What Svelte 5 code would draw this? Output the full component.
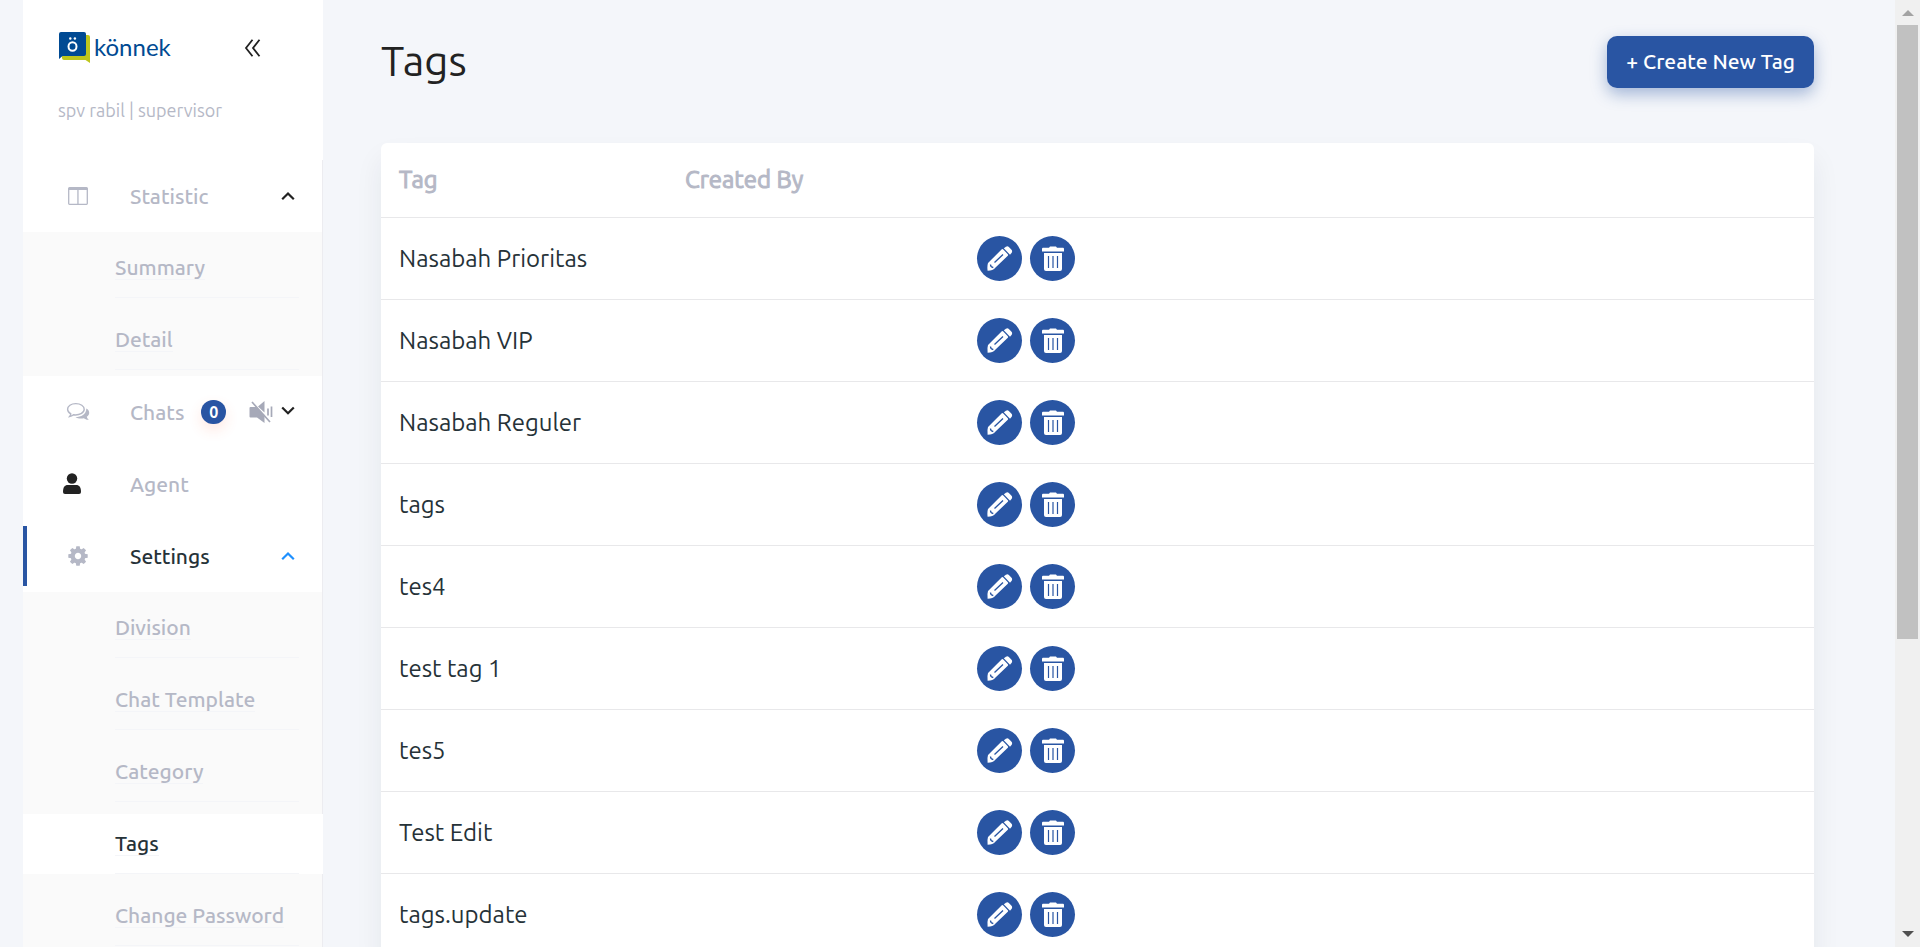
<script>
  const statistic = ['Summary', 'Detail'];
  const settings = ['Division', 'Chat Template', 'Category', 'Tags', 'Change Password'];
  const tags = [
    'Nasabah Prioritas',
    'Nasabah VIP',
    'Nasabah Reguler',
    'tags',
    'tes4',
    'test tag 1',
    'tes5',
    'Test Edit',
    'tags.update'
  ];
  const teeth = [0, 45, 90, 135, 180, 225, 270, 315];
</script>

{#snippet chevron(down)}
  <svg class="chevron" width="14" height="10" viewBox="0 0 14 10" aria-hidden="true">
    <path d={down ? 'M1.2 1.500 7 7.300 12.800 1.500' : 'M1.2 8.300 7 2.500 12.800 8.300'} fill="none" stroke="currentColor" stroke-width="2.200" />
  </svg>
{/snippet}

{#snippet submenu(items)}
  <ul class="submenu">
    {#each items as item}
      <li class:current={item === 'Tags'}>
        <a href="#{item}"><span>{item}</span></a>
      </li>
    {/each}
  </ul>
{/snippet}

<div class="shell">
  <div class="viewport">
    <aside>
      <div class="brand">
        <div class="brand-row">
          <a class="logo" href="#home">
            <svg width="33" height="34" viewBox="0 0 33 34" aria-hidden="true">
              <path d="M6 5H30Q32 5 32 7V33L27.500 30H6Q4 30 4 28V7Z" fill="#bec61c" />
              <path d="M3 2H26Q28 2 28 4V24Q28 26 26 26H4.500L1 29V4Q1 2 3 2Z" fill="#004a93" />
              <ellipse cx="14.500" cy="16.500" rx="4" ry="4.300" fill="none" stroke="#fff" stroke-width="2" />
              <circle cx="12.300" cy="8.500" r="1.200" fill="#fff" />
              <circle cx="16.900" cy="8.500" r="1.200" fill="#fff" />
            </svg>
            <span>könnek</span>
          </a>
          <button class="collapse" aria-label="Collapse menu">
            <svg width="18" height="20" viewBox="0 0 18 20" aria-hidden="true">
              <path d="M8.500 2.800 2 11 8.500 19.200M15.500 2.800 9 11 15.500 19.200" fill="none" stroke="#222" stroke-width="1.800" />
            </svg>
          </button>
        </div>
        <p>spv rabil | supervisor</p>
      </div>

      <nav>
        <a class="item" href="#statistic">
          <svg class="icon" width="20" height="18" viewBox="0 0 20 18" aria-hidden="true">
            <path d="M.7 2V16.500Q.7 17.300 1.500 17.300H18.500Q19.300 17.300 19.300 16.500V2" fill="none" stroke="currentColor" stroke-width="1.300" />
            <path d="M1.500 0H18.500Q20 0 20 1.500V3H0V1.500Q0 0 1.500 0ZM9.300 2H10.600V17H9.300Z" fill="currentColor" />
          </svg>
          <span class="label">Statistic</span>
          {@render chevron(false)}
        </a>
        {@render submenu(statistic)}

        <a class="item" href="#chats">
          <svg class="icon" width="24" height="20" viewBox="0 0 24 20" aria-hidden="true">
            <path d="M20.300 6.500C22.200 7.500 23.200 9 23.200 10.800 23.200 12.400 22.300 13.800 20.800 14.800 21 16 21.800 17 22.800 17.800 20.800 18 19 17.300 17.800 16.300 14.500 17 11.500 16.500 9.500 15 15 15 20.500 12.500 20.300 6.500Z" fill="currentColor" />
            <path d="M9.800 1.600C5 1.600 1.600 4 1.600 7.300 1.600 9.200 2.800 10.800 4.800 11.900 4.700 13 4.200 13.800 3.500 14.600 5.200 14.400 6.500 13.700 7.500 12.800 13.500 13.500 18.200 11 18.200 7.300 18.200 4 14.600 1.600 9.800 1.600Z" fill="#fff" stroke="currentColor" stroke-width="1.400" />
          </svg>
          <span class="label">Chats</span>
          <span class="badge">0</span>
          <svg class="mute" width="24" height="24" viewBox="0 0 24 24" aria-hidden="true">
            <path d="M1.500 7H7L15.500 15V23L8 17.500H1.500Q.5 17.500 .5 16.500V8Q.5 7 1.500 7ZM9 6.500 15.500 1V12.500Z" fill="currentColor" />
            <path d="M3 2 21 22M19 8.500V15.500M22.500 6.500V17" fill="none" stroke="currentColor" stroke-width="1.700" />
          </svg>
          {@render chevron(true)}
        </a>

        <a class="item agent" href="#agent">
          <svg class="icon" width="20" height="22" viewBox="0 0 20 22" aria-hidden="true">
            <circle cx="10" cy="5.500" r="5.200" fill="#222" />
            <path d="M1 19C1 14.500 2.500 12 6 12H14C17.500 12 19 14.500 19 19Q19 21 17 21H3Q1 21 1 19Z" fill="#222" />
          </svg>
          <span class="label">Agent</span>
        </a>

        <a class="item active" href="#settings">
          <svg class="icon" width="20" height="20" viewBox="-10 -10 20 20" aria-hidden="true">
            <circle r="5.300" fill="none" stroke="currentColor" stroke-width="4.200" />
            {#each teeth as angle}
              <path d="M-2.300 -6.500-1.700 -9.700H1.700L2.300 -6.500Z" fill="currentColor" transform="rotate({angle})" />
            {/each}
          </svg>
          <span class="label">Settings</span>
          {@render chevron(false)}
        </a>
        {@render submenu(settings)}
      </nav>
    </aside>

    <main>
      <header>
        <h1>Tags</h1>
        <button class="create">+ Create New Tag</button>
      </header>

      <div class="card">
        <table>
          <thead>
            <tr><th class="name">Tag</th><th class="author">Created By</th><th></th></tr>
          </thead>
          <tbody>
            {#each tags as tag}
              <tr>
                <td>{tag}</td>
                <td></td>
                <td>
                  <div class="actions">
                    <button aria-label="Edit {tag}">
                      <svg width="26" height="26" viewBox="0 0 26 26" aria-hidden="true">
                        <path d="M14.800 3.300Q15.600 2.800 16.300 3.600L20.800 8.200Q21.500 9 20.800 9.700L8.500 21.500Q6 24.800 .6 24.800Q0 20 1 17Z" fill="#fff" />
                        <path d="M16.800 2.200 19 .7Q20.500 -.2 21.900 1.100L24.500 3.800Q25.700 5.200 24.700 6.700L23 8.700Z" fill="#fff" />
                        <path d="M7.500 16.500 16 8.500M3.500 18.500Q3.500 21.300 6.300 21.500" fill="none" stroke="#2955a3" stroke-width="1.300" />
                      </svg>
                    </button>
                    <button aria-label="Delete {tag}">
                      <svg width="24" height="26" viewBox="0 0 24 26" aria-hidden="true">
                        <path d="M9 .5H15L16 1.800H22Q23 1.800 23 3V5.500H1V3Q1 1.800 2 1.800H8Z" fill="#fff" />
                        <path d="M3 7H21V23Q21 25 19 25H5Q3 25 3 23Z" fill="#fff" />
                        <path d="M7.500 10V22M12 10V22M16.500 10V22" stroke="#2955a3" stroke-width="1.200" />
                      </svg>
                    </button>
                  </div>
                </td>
              </tr>
            {/each}
          </tbody>
        </table>
      </div>
    </main>
  </div>

  <div class="scrollbar" aria-hidden="true">
    <svg width="12" height="6" viewBox="0 0 12 6"><path d="M0 6 6 0 12 6Z" fill="#a3a3a3" /></svg>
    <div class="track"><div class="thumb"></div></div>
    <svg width="12" height="6" viewBox="0 0 12 6"><path d="M0 0 6 6 12 0Z" fill="#505050" /></svg>
  </div>
</div>

<style>
  :global(body) {
    background: #f4f6fa;
    color: #263238;
    font-family: Ubuntu, 'Noto Sans', sans-serif;
  }

  .shell {
    display: flex;
    height: 100vh;
  }

  .viewport {
    display: flex;
    flex: 1;
    min-width: 0;
    padding-left: 23px;
    overflow-y: auto;
    scrollbar-width: none;
    align-items: flex-start;
  }

  button {
    padding: 0;
    border: 0;
    background: none;
    font: inherit;
    cursor: pointer;
  }

  a {
    color: inherit;
    text-decoration: none;
  }

  svg {
    display: block;
    flex: none;
  }

  aside {
    box-sizing: border-box;
    flex: none;
    width: 300px;
    min-height: 100%;
    background: #fff;
    color: #b5b8c6;
  }

  .brand {
    box-sizing: border-box;
    height: 160px;
    padding: 30px 61px 0 35px;
  }

  .brand-row {
    display: flex;
    align-items: center;
    justify-content: space-between;
  }

  .logo {
    display: flex;
    align-items: center;
    gap: 3px;
    color: #004a93;
    font: 24px/32px Lato, sans-serif;
  }

  .brand p {
    margin: 32px 0 0;
    font-size: 18px;
    line-height: 28px;
  }

  nav {
    border-right: 1px solid #ececf0;
  }

  .item {
    display: flex;
    align-items: center;
    height: 60px;
    padding: 6px 27px 6px 0;
    font-size: 21px;
    font-weight: 500;
  }

  .icon {
    width: 24px;
    margin: 0 40px 0 43px;
  }

  .active {
    color: #263238;
    background: linear-gradient(#2955a3, #2955a3) left center / 4px 60px no-repeat;
  }

  .active .icon {
    color: #b5b8c6;
  }

  .agent .icon {
    margin: 0 46px 0 37px;
  }

  .chevron {
    margin-left: auto;
    color: #222;
  }

  .active .chevron {
    color: #1e90ff;
  }

  .badge {
    width: 25px;
    margin-left: 17px;
    border-radius: 12px;
    background: #2955a3;
    box-shadow: 0 6px 14px rgb(255 90 50 / 14%);
    color: #fff;
    font-size: 16px;
    font-weight: 700;
    line-height: 24px;
    text-align: center;
  }

  .mute {
    margin-left: 23px;
    color: #a6a9b8;
  }

  .mute + .chevron {
    margin-bottom: 3px;
  }

  .submenu {
    margin: 0;
    padding: 6px 0;
    background: #fafafa;
    list-style: none;
  }

  .submenu li {
    margin-right: -1px;
    padding: 0 24px 0 92px;
  }

  .submenu li + li {
    margin-top: 12px;
  }

  .submenu a {
    display: flex;
    align-items: center;
    height: 59px;
    border-bottom: 1px solid #f4f5f8;
    font-size: 21px;
    font-weight: 500;
    line-height: 24px;
    white-space: nowrap;
  }

  .submenu span {
    border-bottom: 1px solid #f4f5f8;
  }

  .submenu .current {
    background: #fff;
    color: #263238;
  }

  main {
    flex: 1;
    min-width: 0;
    padding: 36px 81px 40px 58px;
  }

  header {
    display: flex;
    align-items: flex-start;
    justify-content: space-between;
    margin-bottom: 55px;
  }

  h1 {
    margin: 0;
    color: #222;
    font-size: 42px;
    font-weight: 400;
    line-height: 50px;
  }

  .create {
    padding: 0 19px 2px;
    border-radius: 10px;
    background: #2955a3;
    box-shadow: 0 6px 16px rgb(41 85 163 / 40%);
    color: #fff;
    font-size: 21px;
    font-weight: 500;
    line-height: 50px;
  }

  .card {
    border-radius: 6px;
    background: #fff;
    box-shadow: 0 16px 28px rgb(30 40 60 / 7%);
  }

  table {
    width: 100%;
    border-collapse: collapse;
    font-size: 24px;
    line-height: 36px;
  }

  th {
    height: 36px;
    padding: 19px 18px;
    border-bottom: 1px solid #e8e8ea;
    color: #b5b8c6;
    font-weight: 400;
    text-align: left;
    -webkit-text-stroke: 1px currentColor;
  }

  .name {
    width: 250px;
  }

  .author {
    width: 256px;
  }

  td {
    padding: 18px;
    border-bottom: 1px solid #e8e8ea;
  }

  .actions {
    display: flex;
    gap: 8px;
  }

  .actions button {
    display: grid;
    place-items: center;
    width: 45px;
    height: 45px;
    border-radius: 50%;
    background: #2955a3;
  }

  .scrollbar {
    box-sizing: border-box;
    display: flex;
    flex: none;
    flex-direction: column;
    align-items: center;
    gap: 9px;
    width: 25px;
    padding: 10px 0;
    background: #f0f0f0;
  }

  .track {
    flex: 1;
    align-self: stretch;
    padding: 0 2px;
  }

  .thumb {
    height: 68.5%;
    background: #c1c1c1;
  }
</style>
